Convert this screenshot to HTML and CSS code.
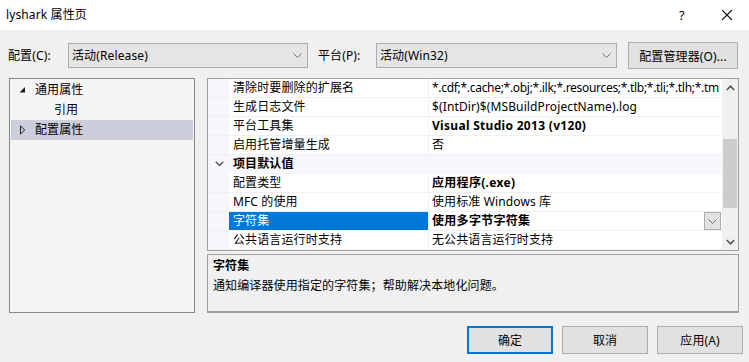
FILE: index.html
```html
<!DOCTYPE html>
<html lang="zh-CN">
<head>
<meta charset="utf-8">
<title>lyshark 属性页</title>
<link rel="stylesheet" href="styles.css">
</head>
<body>
<div class="dialog">
  <div class="titlebar">
    <span class="title">lyshark 属性页</span>
    <div class="tb-btns">
      <span class="help">?</span>
      <svg class="close" width="12" height="12" viewBox="0 0 12 12"><path d="M1 1L11 11M11 1L1 11" stroke="#1a1a1a" stroke-width="1.1" fill="none"/></svg>
    </div>
  </div>

  <div class="toolbar">
    <span class="lbl lbl1">配置(C):</span>
    <div class="combo combo1"><span class="combo-text">活动(Release)</span><svg class="chev" width="9" height="5" viewBox="0 0 9 5"><path d="M0.5 0.5L4.5 4.5L8.5 0.5" stroke="#707070" fill="none"/></svg></div>
    <span class="lbl lbl2">平台(P):</span>
    <div class="combo combo2"><span class="combo-text">活动(Win32)</span><svg class="chev" width="9" height="5" viewBox="0 0 9 5"><path d="M0.5 0.5L4.5 4.5L8.5 0.5" stroke="#707070" fill="none"/></svg></div>
    <button class="btn mgr">配置管理器(O)...</button>
  </div>

  <div class="main">
    <div class="tree">
      <div class="node"><svg class="exp" width="7" height="7" viewBox="0 0 7 7"><path d="M6 0.5V6H0.5Z" fill="#1e1e1e"/></svg><span>通用属性</span></div>
      <div class="node child"><span>引用</span></div>
      <div class="node sel"><svg class="exp" width="7" height="10" viewBox="0 0 7 10"><path d="M1.5 0.8L5.6 5L1.5 9.2Z" fill="none" stroke="#1e1e1e" stroke-width="1"/></svg><span>配置属性</span></div>
    </div>

    <div class="right">
      <div class="grid">
        <div class="rows">
          <div class="row"><div class="m"></div><div class="n">清除时要删除的扩展名</div><div class="v"><span class="clip">*.cdf;*.cache;*.obj;*.ilk;*.resources;*.tlb;*.tli;*.tlh;*.tm</span></div></div>
          <div class="row"><div class="m"></div><div class="n">生成日志文件</div><div class="v">$(IntDir)$(MSBuildProjectName).log</div></div>
          <div class="row"><div class="m"></div><div class="n">平台工具集</div><div class="v b">Visual Studio 2013 (v120)</div></div>
          <div class="row"><div class="m"></div><div class="n">启用托管增量生成</div><div class="v">否</div></div>
          <div class="row cat"><div class="m"><svg width="9" height="6" viewBox="0 0 9 6"><path d="M0.8 0.8L4.5 4.6L8.2 0.8" stroke="#555" stroke-width="1.4" fill="none"/></svg></div><div class="catname">项目默认值</div></div>
          <div class="row"><div class="m"></div><div class="n">配置类型</div><div class="v b">应用程序(.exe)</div></div>
          <div class="row"><div class="m"></div><div class="n">MFC 的使用</div><div class="v">使用标准 Windows 库</div></div>
          <div class="row selrow"><div class="m"></div><div class="n">字符集</div><div class="v b"><span>使用多字节字符集</span><span class="dd"><svg width="9" height="5" viewBox="0 0 9 5"><path d="M0.5 0.5L4.5 4.5L8.5 0.5" stroke="#707070" fill="none"/></svg></span></div></div>
          <div class="row"><div class="m"></div><div class="n">公共语言运行时支持</div><div class="v">无公共语言运行时支持</div></div>
        </div>
        <div class="vscroll">
          <div class="arrow"><svg width="9" height="6" viewBox="0 0 9 6"><path d="M0.8 5L4.5 1.2L8.2 5" stroke="#505050" stroke-width="1.5" fill="none"/></svg></div>
          <div class="track"><div class="thumb"></div></div>
          <div class="arrow"><svg width="9" height="6" viewBox="0 0 9 6"><path d="M0.8 1L4.5 4.8L8.2 1" stroke="#505050" stroke-width="1.5" fill="none"/></svg></div>
        </div>
      </div>
      <div class="desc">
        <div class="desc-title">字符集</div>
        <div class="desc-body">通知编译器使用指定的字符集；帮助解决本地化问题。</div>
      </div>
    </div>
  </div>

  <div class="footer">
    <button class="btn fbtn default">确定</button>
    <button class="btn fbtn">取消</button>
    <button class="btn fbtn">应用(A)</button>
  </div>
</div>
</body>
</html>
```

FILE: styles.css
```css
* { box-sizing: border-box; }
html, body { margin: 0; padding: 0; }
body {
  width: 749px;
  height: 362px;
  overflow: hidden;
  background: #f0f0f0;
  font-family: "Noto Sans", "Noto Sans CJK SC", sans-serif;
  font-size: 12px;
  letter-spacing: 0.12px;
  color: #000;
}
.dialog { width: 749px; height: 362px; display: flex; flex-direction: column; }

.titlebar {
  height: 30px;
  background: #fff;
  display: flex;
  align-items: center;
  justify-content: space-between;
  padding-left: 6px;
}
.title { font-size: 12px; line-height: 16px; }
.tb-btns { display: flex; align-items: center; height: 30px; }
.help { width: 14px; text-align: center; font-size: 13px; margin-right: 32px; line-height: 16px; }
.close { margin-right: 16px; }

.toolbar {
  margin-top: 12px;
  height: 27px;
  display: flex;
  align-items: center;
  padding-left: 8px;
}
.lbl { line-height: 16px; }
.lbl1 { width: 60px; }
.lbl2 { width: 58px; margin-left: 10px; }
.combo {
  height: 25px;
  background: #e5e5e5;
  border: 1px solid #acacac;
  display: flex;
  align-items: center;
  justify-content: space-between;
  padding: 0 5px 0 3px;
}
.combo1 { width: 240px; }
.combo2 { width: 241px; }
.combo-text { line-height: 16px; }
.chev { display: block; }
.btn {
  font-family: inherit;
  font-size: 12px;
  letter-spacing: inherit;
  color: #000;
  background: #e1e1e1;
  border: 1px solid #adadad;
  padding: 0;
  margin: 0;
}
.mgr { width: 110px; height: 27px; margin-left: 11px; }

.main {
  margin-top: 9px;
  height: 235px;
  display: flex;
  padding-left: 9px;
}
.tree {
  width: 186px;
  height: 235px;
  background: #f5f5f5;
  border: 1px solid #828790;
  padding: 1px;
}
.node {
  height: 20px;
  display: flex;
  align-items: center;
  padding-left: 24px;
  position: relative;
  line-height: 16px;
}
.node .exp { position: absolute; left: 8px; top: 50%; transform: translateY(-50%); }
.node.child { padding-left: 43px; }
.node.sel { background: #cccedb; }

.right { margin-left: 12px; width: 532px; display: flex; flex-direction: column; }
.grid {
  height: 173px;
  border: 1px solid #a0a0a0;
  background: #fff;
  display: flex;
  overflow: hidden;
}
.rows { width: 514px; flex: none; min-width: 0; overflow: hidden; }
.row {
  width: 514px;
  height: 19px;
  display: flex;
  border-bottom: 1px solid #f0f0f0;
  line-height: 18px;
  white-space: nowrap;
  overflow: hidden;
}
.m { width: 21px; background: #f5f7fb; flex: none; display: flex; align-items: center; justify-content: center; padding-left: 1px; }
.n { width: 200px; flex: none; padding-left: 4px; border-right: 1px solid #f0f0f0; overflow: hidden; }
.v { flex: 1 1 0; min-width: 0; padding-left: 3px; overflow: hidden; display: flex; align-items: center; justify-content: space-between; }
.clip { display: block; overflow: hidden; white-space: nowrap; min-width: 0; flex: 1 1 0; letter-spacing: -0.3px; }
.b { font-weight: bold; letter-spacing: 0.3px; }
.row.cat { background: #f5f7fb; border-bottom-color: #f5f7fb; }
.catname { font-weight: bold; padding-left: 4px; }
.selrow .n { background: #0078d7; color: #fff; }
.dd {
  width: 17px;
  height: 18px;
  flex: none;
  margin-right: 1px;
  background: #e1e1e1;
  border: 1px solid #adadad;
  display: flex;
  align-items: center;
  justify-content: center;
}
.dd svg { display: block; }

.vscroll {
  width: 16px;
  flex: none;
  background: #f0f0f0;
  display: flex;
  flex-direction: column;
  position: relative;
  z-index: 1;
}
.arrow { height: 17px; display: flex; align-items: center; justify-content: center; }
.arrow svg { display: block; }
.track { flex: 1; padding-top: 43px; padding-left: 1px; padding-right: 1px; }
.thumb { height: 69px; background: #cdcdcd; }

.desc {
  margin-top: 3px;
  height: 59px;
  border: 1px solid #a0a0a0;
  border-bottom: 2px solid #a0a0a0;
  padding: 1px 5px;
}
.desc-title { font-weight: bold; line-height: 20px; }
.desc-body { line-height: 20px; }

.footer {
  margin-top: 13px;
  display: flex;
  justify-content: flex-end;
  padding-right: 6px;
  gap: 9px;
}
.fbtn { width: 86px; height: 28px; }
.fbtn.default { border: 2px solid #0078d7; }
```
